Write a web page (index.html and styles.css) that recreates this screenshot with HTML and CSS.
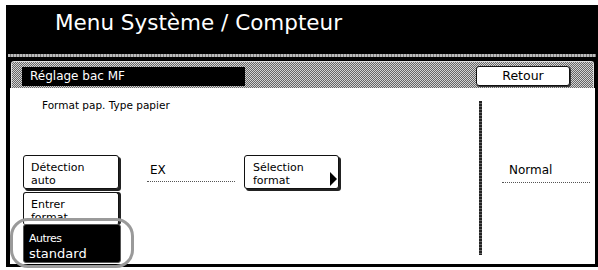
FILE: index.html
```html
<!DOCTYPE html>
<html>
<head>
<meta charset="utf-8">
<link rel="stylesheet" href="styles.css">
</head>
<body>
<div class="screen">
  <div class="title">Menu Système / Compteur</div>
  <div class="sep"></div>
  <div class="bar">
    <div class="label">Réglage bac MF</div>
    <div class="retour">Retour</div>
  </div>
  <div class="content">
    <div class="left">
      <div class="head">Format pap. Type papier</div>
      <div class="row">
        <div class="btncol">
          <div class="btn b1">Détection<br>auto</div>
          <div class="btn b2">Entrer<br>format</div>
          <div class="btn b3"><span class="small">Autres</span><br>standard</div>
        </div>
        <div class="value ex">EX</div>
        <div class="btn sel">Sélection<br>format<span class="tri"></span></div>
      </div>
    </div>
    <div class="vsep"></div>
    <div class="right">
      <div class="value normal">Normal</div>
    </div>
  </div>
  <div class="oval"></div>
</div>
</body>
</html>
```
FILE: styles.css
```css
html, body {
  margin: 0;
  padding: 0;
  background: #fff;
  overflow: hidden;
}
body {
  font-family: "DejaVu Sans", Verdana, sans-serif;
  width: 598px;
  height: 270px;
}
.screen {
  position: relative;
  margin: 5px 0 0 6px;
  width: 592px;
  height: 262px;
  background: #000;
  display: flex;
  flex-direction: column;
}
.title {
  height: 49px;
  color: #fff;
  font-size: 21.5px;
  padding-left: 49px;
  display: flex;
  align-items: center;
  box-sizing: border-box;
  padding-bottom: 14px;
}
.sep {
  height: 3px;
  margin: 0 2px;
  background: repeating-linear-gradient(90deg, #bbb 0 2px, #777 2px 3px);
}
.bar {
  margin: 4px 4px 0 5px;
  height: 26px;
  border: 1px solid #ddd;
  border-bottom: none;
  border-radius: 3px 3px 0 0;
  background: repeating-conic-gradient(#666 0 25%, #d4d4d4 0 50%) 0 0 / 2px 2px;
  display: flex;
  align-items: center;
  padding: 0 23px 0 10px;
}
.label {
  width: 223px;
  height: 19px;
  background: #000;
  color: #fff;
  font-size: 12px;
  line-height: 19px;
  padding-left: 8px;
  box-sizing: border-box;
  margin-top: 2px;
}
.retour {
  margin-left: auto;
  width: 94px;
  height: 20px;
  box-sizing: border-box;
  background: #fff;
  border: 1px solid #111;
  border-radius: 3px;
  box-shadow: 1px 1px 0 #333;
  font-size: 12.5px;
  line-height: 18px;
  text-align: center;
  margin-top: 2px;
}
.content {
  flex: 1;
  margin: 0 3px 3px 4px;
  background: #fff;
  display: flex;
  overflow: hidden;
}
.left {
  width: 469px;
  display: flex;
  flex-direction: column;
}
.head {
  font-size: 10.5px;
  line-height: 13px;
  padding: 11px 0 0 32px;
}
.row {
  display: flex;
  align-items: flex-start;
  margin-top: 43px;
}
.btncol {
  margin-left: 13px;
  width: 98px;
  display: flex;
  flex-direction: column;
}
.btn {
  box-sizing: border-box;
  background: #fff;
  border: 1px solid #111;
  border-radius: 3px;
  box-shadow: 2px 2px 0 #222;
  font-size: 11px;
  line-height: 13px;
  padding: 5px 0 0 7px;
  overflow: hidden;
  position: relative;
}
.b1 {
  width: 96px;
  height: 34px;
}
.b2 {
  width: 96px;
  height: 33px;
  margin-top: 3px;
  padding-top: 5px;
  line-height: 13px;
  box-shadow: 2px 0 0 #222;
  border-bottom: none;
}
.b3 {
  width: 98px;
  height: 39px;
  margin-top: -1px;
  background: #000;
  color: #fff;
  border: 1px solid #555;
  box-shadow: none;
  font-size: 13px;
  line-height: 15px;
  padding: 5px 0 0 5px;
  z-index: 1;
}
.b3 .small {
  font-size: 11px;
  letter-spacing: -0.5px;
}
.value {
  font-size: 12px;
  line-height: 14px;
  border-bottom: 1px dotted #555;
  box-sizing: border-box;
}
.ex {
  margin: 8px 0 0 26px;
  width: 88px;
  height: 19px;
  padding-left: 3px;
}
.sel {
  margin-left: 9px;
  width: 95px;
  height: 34px;
  padding-left: 8px;
  padding-top: 5px;
}
.tri {
  position: absolute;
  right: 1px;
  bottom: 2px;
  width: 0;
  height: 0;
  border-top: 7px solid transparent;
  border-bottom: 7px solid transparent;
  border-left: 7px solid #000;
}
.vsep {
  width: 3px;
  height: 154px;
  margin-top: 13px;
  background: repeating-linear-gradient(180deg, #222 0 2px, #666 2px 3px);
}
.right {
  flex: 1;
  padding: 75px 0 0 20px;
}
.normal {
  width: 88px;
  height: 20px;
  padding-left: 7px;
}
.oval {
  position: absolute;
  left: 4px;
  top: 213px;
  width: 124px;
  height: 50px;
  box-sizing: border-box;
  border: 3px solid #9a9a9a;
  border-radius: 18px;
  z-index: 2;
}
```
